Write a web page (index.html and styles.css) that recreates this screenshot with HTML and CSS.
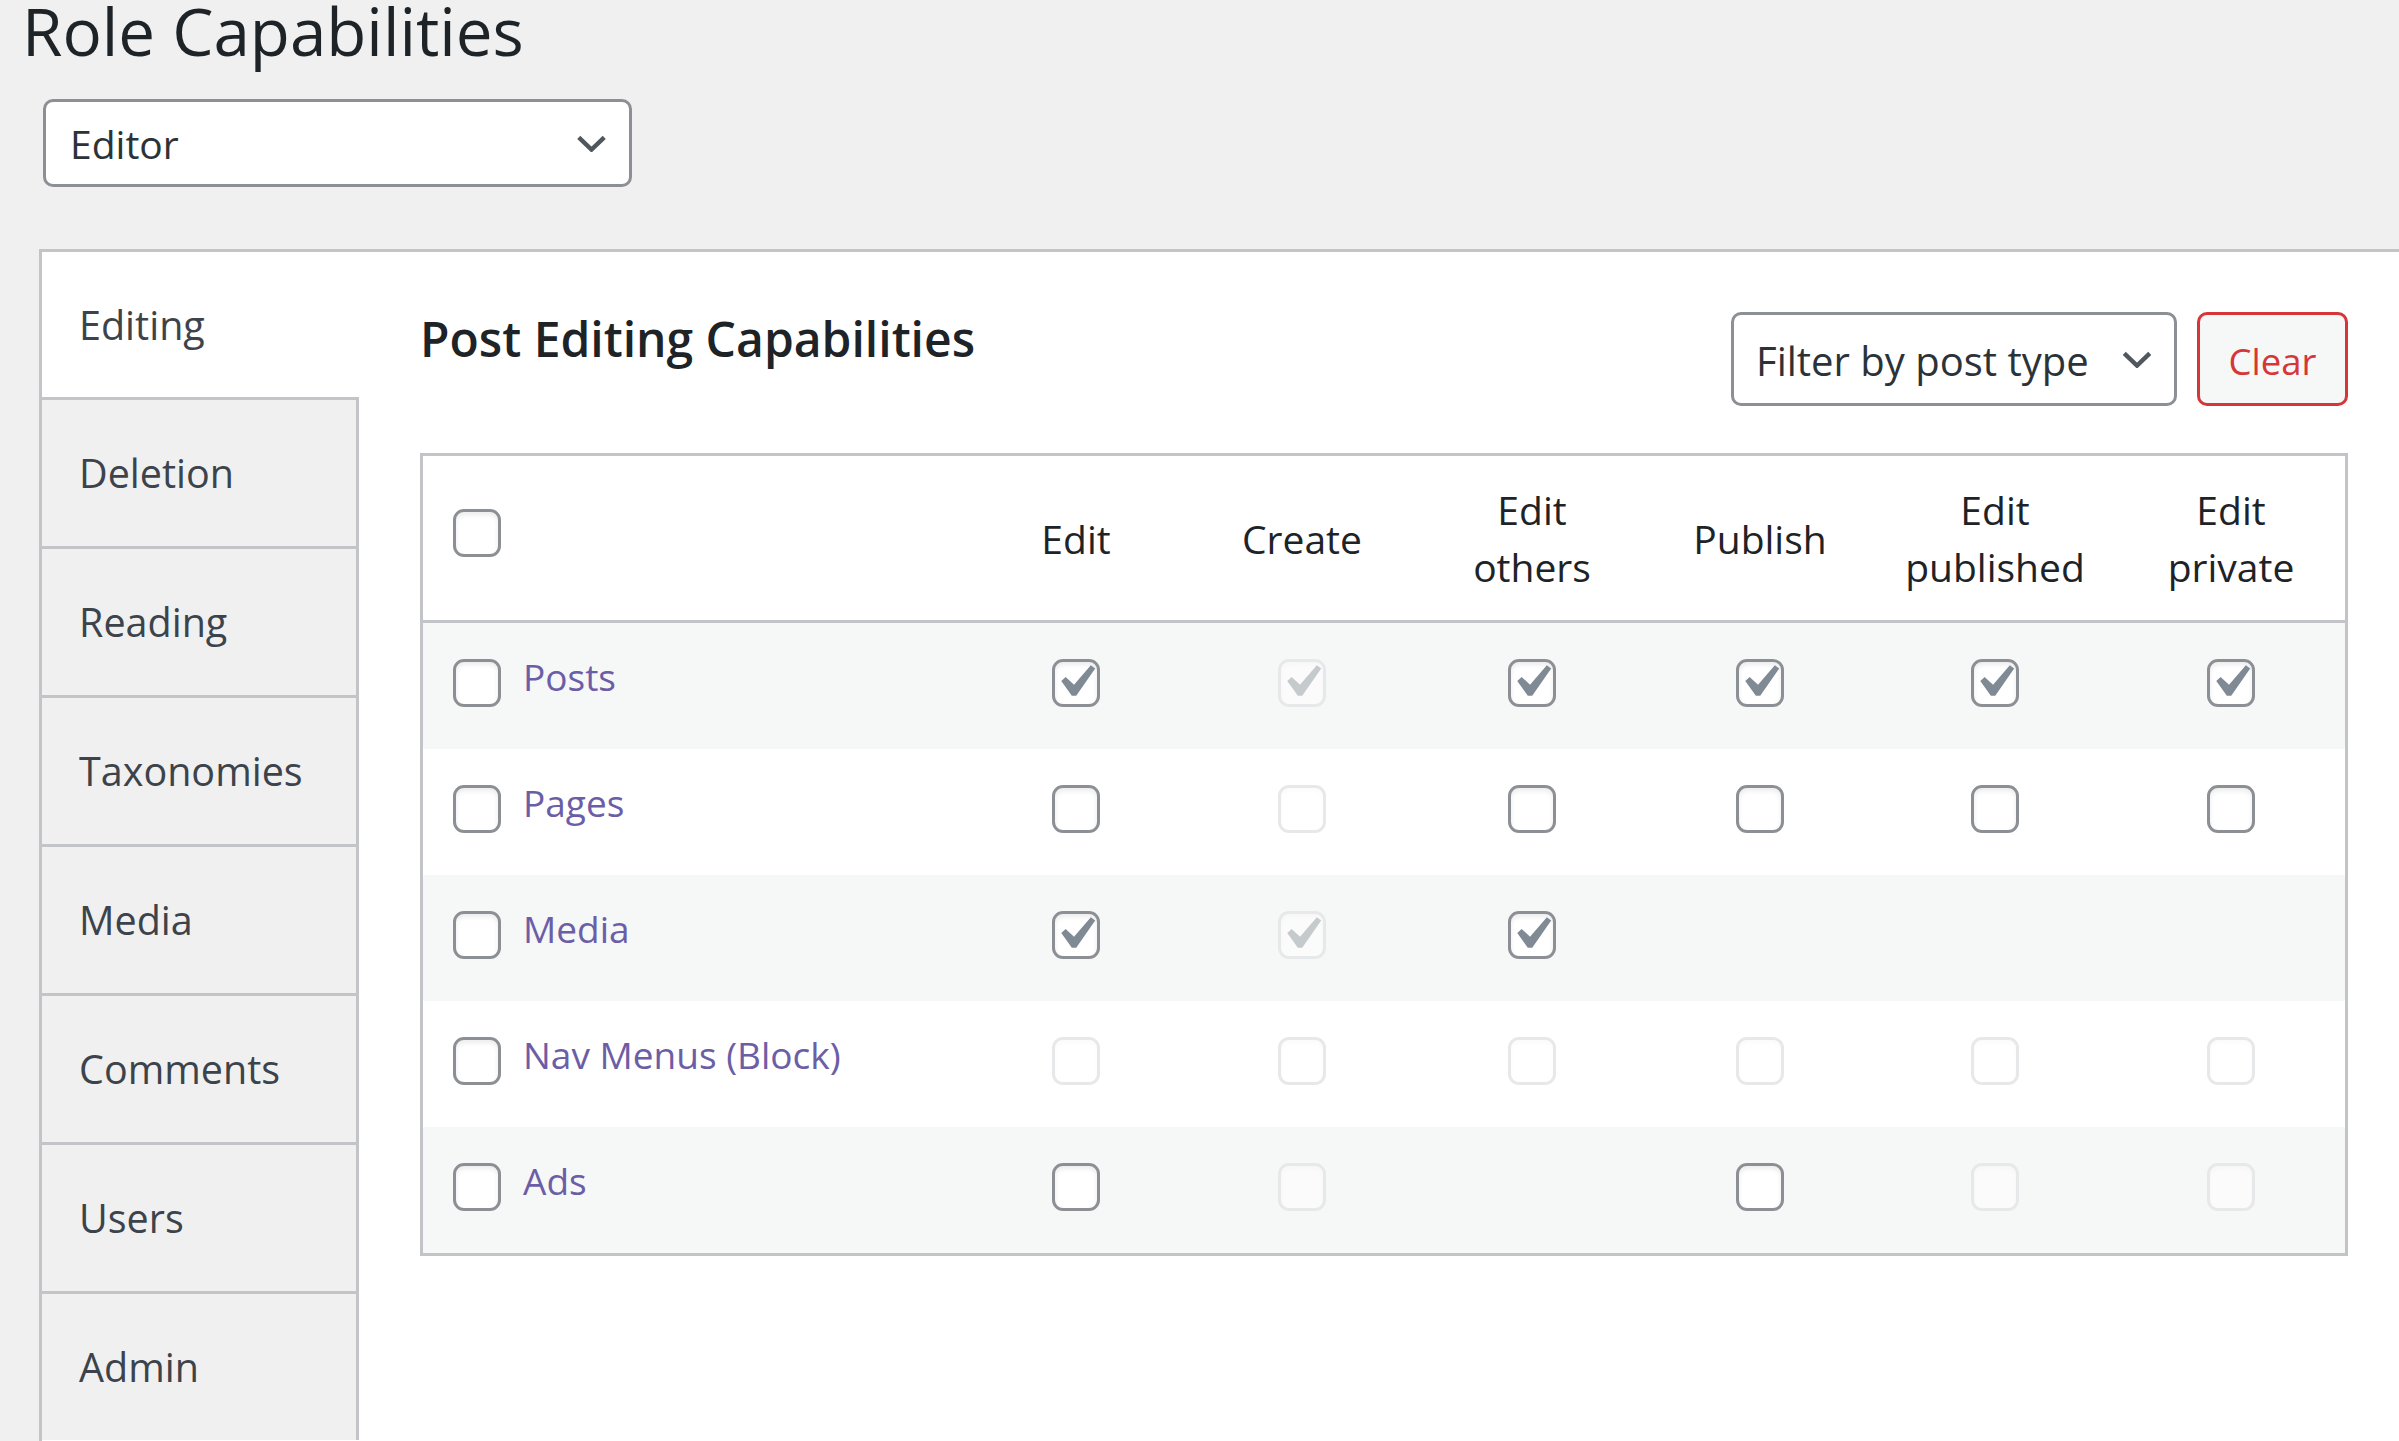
FILE: index.html
```html
<!DOCTYPE html>
<html lang="en">
<head>
<meta charset="utf-8">
<title>Role Capabilities</title>
<link rel="stylesheet" href="styles.css">
</head>
<body>
<div class="wrap">
  <h1 class="page-title">Role Capabilities</h1>
  <div class="role-select">
    <span class="role-select__value">Editor</span>
    <svg class="chevron" viewBox="0 0 32 18"><path d="M2.5 2.5 L16 15.5 L29.5 2.5"/></svg>
  </div>

  <div class="panel">
    <nav class="tabs">
      <div class="tab tab--active">Editing</div>
      <div class="tab">Deletion</div>
      <div class="tab">Reading</div>
      <div class="tab">Taxonomies</div>
      <div class="tab">Media</div>
      <div class="tab">Comments</div>
      <div class="tab">Users</div>
      <div class="tab">Admin</div>
    </nav>

    <section class="content">
      <div class="content-head">
        <h2 class="section-title">Post Editing Capabilities</h2>
        <div class="filters">
          <div class="filter-select">
            <span>Filter by post type</span>
            <svg class="chevron" viewBox="0 0 32 18"><path d="M2.5 2.5 L16 15.5 L29.5 2.5"/></svg>
          </div>
          <button class="btn-clear" type="button">Clear</button>
        </div>
      </div>

      <table class="caps">
        <colgroup>
          <col class="c-name">
          <col class="c-edit">
          <col class="c-create">
          <col class="c-others">
          <col class="c-publish">
          <col class="c-published">
          <col class="c-private">
        </colgroup>
        <thead>
          <tr>
            <th class="th-name"><span class="cb cb--head"></span></th>
            <th>Edit</th>
            <th>Create</th>
            <th>Edit<br>others</th>
            <th>Publish</th>
            <th>Edit<br>published</th>
            <th>Edit<br>private</th>
          </tr>
        </thead>
        <tbody>
          <tr>
            <td class="td-name"><div class="name-cell"><span class="cb cb--row"></span><a class="type-link">Posts</a></div></td>
            <td><span class="cb cb--on"><svg viewBox="3.86 3.86 12.86 12.86"><path d="M14.83 4.89l1.34.94-5.81 8.38H9.02L5.78 9.67l1.34-1.25 2.57 2.4z"/></svg></span></td>
            <td><span class="cb cb--on cb--off"><svg viewBox="3.86 3.86 12.86 12.86"><path d="M14.83 4.89l1.34.94-5.81 8.38H9.02L5.78 9.67l1.34-1.25 2.57 2.4z"/></svg></span></td>
            <td><span class="cb cb--on"><svg viewBox="3.86 3.86 12.86 12.86"><path d="M14.83 4.89l1.34.94-5.81 8.38H9.02L5.78 9.67l1.34-1.25 2.57 2.4z"/></svg></span></td>
            <td><span class="cb cb--on"><svg viewBox="3.86 3.86 12.86 12.86"><path d="M14.83 4.89l1.34.94-5.81 8.38H9.02L5.78 9.67l1.34-1.25 2.57 2.4z"/></svg></span></td>
            <td><span class="cb cb--on"><svg viewBox="3.86 3.86 12.86 12.86"><path d="M14.83 4.89l1.34.94-5.81 8.38H9.02L5.78 9.67l1.34-1.25 2.57 2.4z"/></svg></span></td>
            <td><span class="cb cb--on"><svg viewBox="3.86 3.86 12.86 12.86"><path d="M14.83 4.89l1.34.94-5.81 8.38H9.02L5.78 9.67l1.34-1.25 2.57 2.4z"/></svg></span></td>
          </tr>
          <tr>
            <td class="td-name"><div class="name-cell"><span class="cb cb--row"></span><a class="type-link">Pages</a></div></td>
            <td><span class="cb"></span></td>
            <td><span class="cb cb--off"></span></td>
            <td><span class="cb"></span></td>
            <td><span class="cb"></span></td>
            <td><span class="cb"></span></td>
            <td><span class="cb"></span></td>
          </tr>
          <tr>
            <td class="td-name"><div class="name-cell"><span class="cb cb--row"></span><a class="type-link">Media</a></div></td>
            <td><span class="cb cb--on"><svg viewBox="3.86 3.86 12.86 12.86"><path d="M14.83 4.89l1.34.94-5.81 8.38H9.02L5.78 9.67l1.34-1.25 2.57 2.4z"/></svg></span></td>
            <td><span class="cb cb--on cb--off"><svg viewBox="3.86 3.86 12.86 12.86"><path d="M14.83 4.89l1.34.94-5.81 8.38H9.02L5.78 9.67l1.34-1.25 2.57 2.4z"/></svg></span></td>
            <td><span class="cb cb--on"><svg viewBox="3.86 3.86 12.86 12.86"><path d="M14.83 4.89l1.34.94-5.81 8.38H9.02L5.78 9.67l1.34-1.25 2.57 2.4z"/></svg></span></td>
            <td></td>
            <td></td>
            <td></td>
          </tr>
          <tr>
            <td class="td-name"><div class="name-cell"><span class="cb cb--row"></span><a class="type-link">Nav Menus (Block)</a></div></td>
            <td><span class="cb cb--off"></span></td>
            <td><span class="cb cb--off"></span></td>
            <td><span class="cb cb--off"></span></td>
            <td><span class="cb cb--off"></span></td>
            <td><span class="cb cb--off"></span></td>
            <td><span class="cb cb--off"></span></td>
          </tr>
          <tr>
            <td class="td-name"><div class="name-cell"><span class="cb cb--row"></span><a class="type-link">Ads</a></div></td>
            <td><span class="cb"></span></td>
            <td><span class="cb cb--off"></span></td>
            <td></td>
            <td><span class="cb"></span></td>
            <td><span class="cb cb--off"></span></td>
            <td><span class="cb cb--off"></span></td>
          </tr>
        </tbody>
      </table>
    </section>
  </div>
</div>
</body>
</html>
```

FILE: styles.css
```css
html, body {
  margin: 0;
  padding: 0;
  overflow: hidden;
  background: #f0f0f1;
}

body {
  font-family: "Open Sans", "Noto Sans", sans-serif;
  color: #1d2327;
}

.wrap {
  padding-left: 20px;
}

.page-title {
  margin: 0 0 0 2px;
  font-size: 65.5px;
  line-height: 62px;
  font-weight: 400;
  color: #1d2327;
}

.role-select {
  box-sizing: border-box;
  width: 589px;
  height: 88px;
  margin: 37px 0 0 23px;
  padding: 0 22px 0 24px;
  display: flex;
  align-items: center;
  justify-content: space-between;
  background: #fff;
  border: 3px solid #8c8f94;
  border-radius: 10px;
  font-size: 39px;
  color: #2c3338;
}

.chevron {
  width: 31px;
  height: 17px;
  fill: none;
  stroke: #50575e;
  stroke-width: 4.6;
  flex: none;
}

.panel {
  margin: 62px 0 0 19px;
  display: flex;
  background: #fff;
  border-top: 3px solid #c3c4c7;
  border-left: 3px solid #c3c4c7;
  min-height: 1300px;
}

.tabs {
  width: 317px;
  flex: none;
  display: flex;
  flex-direction: column;
}

.tab {
  box-sizing: border-box;
  height: 149px;
  display: flex;
  align-items: center;
  padding-left: 37px;
  background: #f0f0f1;
  border-top: 3px solid #c3c4c7;
  border-right: 3px solid #c3c4c7;
  font-size: 39.5px;
  color: #3c434a;
}

.tab--active {
  height: 145px;
  background: #fff;
  border-top: none;
  border-right-color: transparent;
}

.content {
  flex: 1;
  padding: 0 51px 0 61px;
}

.content-head {
  display: flex;
  justify-content: space-between;
  align-items: flex-start;
  padding-top: 60px;
}

.section-title {
  margin: 0;
  font-size: 48px;
  line-height: 54px;
  font-weight: 600;
  color: #1d2327;
}

.filters {
  display: flex;
  gap: 20px;
}

.filter-select {
  box-sizing: border-box;
  width: 446px;
  height: 94px;
  padding: 3px 21px 0 22px;
  display: flex;
  align-items: center;
  justify-content: space-between;
  background: #fff;
  border: 3px solid #8c8f94;
  border-radius: 10px;
  font-size: 40px;
  color: #2c3338;
}

.filter-select .chevron {
  width: 32px;
  margin-top: -3px;
}

.btn-clear {
  box-sizing: border-box;
  width: 151px;
  height: 94px;
  padding: 3px 0 0;
  background: #f6f7f7;
  border: 3px solid #d63638;
  border-radius: 10px;
  font-family: inherit;
  font-size: 36.5px;
  color: #d63638;
}

.caps {
  width: 100%;
  margin-top: 47px;
  table-layout: fixed;
  border-collapse: separate;
  border-spacing: 0;
  border: 3px solid #c3c4c7;
}

.c-name { width: 542px; }
.c-edit { width: 222px; }
.c-create { width: 230px; }
.c-others { width: 230px; }
.c-publish { width: 226px; }
.c-published { width: 244px; }
.c-private { width: 228px; }

.caps th {
  height: 164px;
  padding: 0;
  background: #fff;
  border-bottom: 3px solid #c3c4c7;
  vertical-align: middle;
  text-align: center;
  font-size: 39px;
  line-height: 57px;
  font-weight: 400;
  color: #1d2327;
}

.caps th.th-name {
  text-align: left;
}

.caps td {
  height: 126px;
  padding: 0;
  vertical-align: middle;
  text-align: center;
  background: #fff;
}

.caps tbody tr:nth-child(odd) td {
  background: #f6f7f7;
}

.name-cell {
  display: flex;
  align-items: center;
  gap: 22px;
  padding: 0 0 6px 30px;
}

.type-link {
  font-size: 37px;
  line-height: 48px;
  padding-bottom: 12px;
  color: #6c5ea6;
  text-decoration: none;
}

.cb {
  box-sizing: border-box;
  display: block;
  width: 48px;
  height: 48px;
  margin: 0 auto 6px;
  background: #fff;
  border: 3px solid #8c8f94;
  border-radius: 11px;
  box-shadow: inset 0 3px 5px rgba(0, 0, 0, 0.08);
}

.cb svg {
  display: block;
  width: 100%;
  height: 100%;
  fill: #7f8a94;
}

.cb--head {
  margin: 0 0 11px 30px;
}

.cb--row {
  margin: 0;
  flex: none;
}

.cb--off {
  background: rgba(255, 255, 255, 0.5);
  border-color: #e7e8e9;
  box-shadow: inset 0 3px 5px rgba(0, 0, 0, 0.02);
}

.cb--off svg {
  fill: #c5cacd;
}
```
